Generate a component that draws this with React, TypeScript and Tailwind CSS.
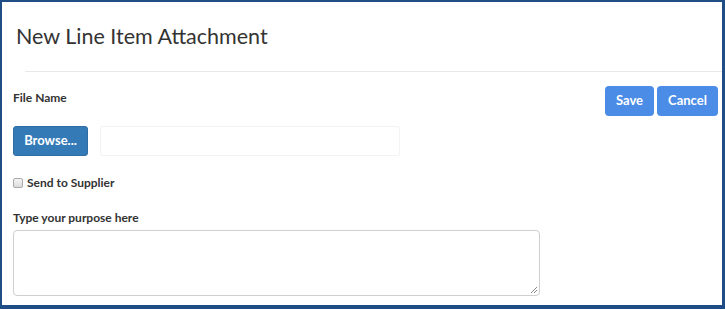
import React from "react";

export default function App() {
  return (
    <div
      className="w-[725px] h-[309px] bg-white border-t-2 border-l-2 border-r-[3px] border-b-4 border-[#1f4d86] overflow-hidden"
      style={{ fontFamily: "Lato, 'Open Sans', sans-serif" }}
    >
      <div className="h-[69px] flex items-start">
        <h1 className="pl-[14px] pt-[21px] text-[21.5px] leading-[26px] text-[#333]">New Line Item Attachment</h1>
      </div>
      <div className="ml-[23px] h-px bg-[#e8e8e8]" />
      <div className="flex justify-between pr-[4px]">
        <div className="pl-[11px] flex-1">
          <div className="pt-[19px] text-[12px] leading-[14px] font-bold text-[#333]">File Name</div>
          <div className="mt-[21px] flex items-center">
            <button className="w-[75px] h-[30px] rounded-[3px] bg-[#337ab7] border border-[#2e6da4] text-white text-[13px] font-bold">
              Browse...
            </button>
            <div className="ml-[12px] w-[300px] h-[30px] border border-[#f3f3f3] rounded-[2px]" />
          </div>
          <label className="mt-[20px] flex items-center gap-[4px] text-[12px] leading-[14px] font-bold text-[#333]">
            <span className="w-[10px] h-[10px] rounded-[2px] border border-[#aaa] bg-gradient-to-b from-[#f4f4f4] to-[#dcdcdc]" />
            Send to Supplier
          </label>
          <div className="mt-[21px] text-[12px] leading-[14px] font-bold text-[#333]">Type your purpose here</div>
          <div className="mt-[5px] w-[527px] h-[66px] border border-[#cfcfcf] rounded-[4px] relative">
            <svg className="absolute right-[1px] bottom-[1px]" width="8" height="8" viewBox="0 0 8 8">
              <path d="M7 1L1 7M7 4L4 7" stroke="#888" strokeWidth="1" />
            </svg>
          </div>
        </div>
        <div className="pt-[14px] flex gap-[3px] items-start">
          <button className="w-[49px] h-[30px] rounded-[4px] bg-[#4a8ce6] text-white text-[13px] font-bold">Save</button>
          <button className="w-[61px] h-[30px] rounded-[4px] bg-[#4a8ce6] text-white text-[13px] font-bold">Cancel</button>
        </div>
      </div>
    </div>
  );
}
